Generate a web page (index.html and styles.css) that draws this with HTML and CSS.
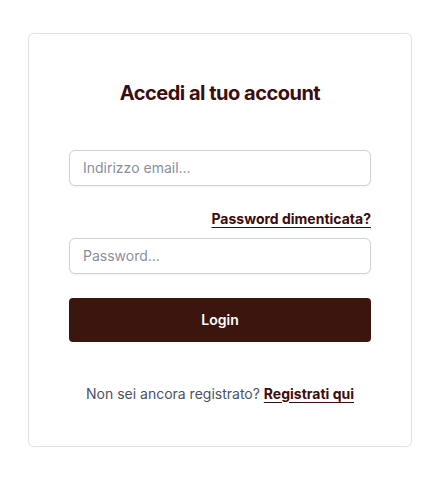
FILE: index.html
```html
<!DOCTYPE html>
<html lang="it">
<head>
<meta charset="utf-8">
<link rel="stylesheet" href="styles.css">
</head>
<body>
<main class="page">
  <div class="card">
    <h1 class="title">Accedi al tuo account</h1>
    <form class="form">
      <input class="input" type="email" placeholder="Indirizzo email...">
      <div class="forgot-row"><a class="link" href="#">Password dimenticata?</a></div>
      <input class="input" type="password" placeholder="Password...">
      <button class="btn" type="button">Login</button>
    </form>
    <p class="register">Non sei ancora registrato? <a class="link" href="#">Registrati qui</a></p>
  </div>
</main>
</body>
</html>
```
FILE: styles.css
```css
* { box-sizing: border-box; }
html, body { margin: 0; padding: 0; background: #fff; }
body { font-family: Inter, "Noto Sans", sans-serif; }
.page {
  height: 479px;
  padding-right: 2px;
  display: flex;
  align-items: center;
  justify-content: center;
}
.card {
  width: 384px;
  border: 1px solid #e2e2e6;
  border-radius: 6px;
  padding: 45px 40px 42px;
  display: flex;
  flex-direction: column;
}
.title {
  margin: 0;
  text-align: center;
  font-size: 20px;
  line-height: 28px;
  font-weight: 700;
  letter-spacing: -0.5px;
  color: #3b0d0d;
}
.form {
  margin-top: 43px;
  display: flex;
  flex-direction: column;
}
.input {
  height: 36px;
  border: 1px solid #d1d1d8;
  border-radius: 6px;
  padding: 0 13px;
  font-family: inherit;
  font-size: 14px;
  color: #111;
  box-shadow: 0 1px 2px rgba(0,0,0,0.05);
  outline: none;
}
.input::placeholder { color: #8a8f9b; }
.forgot-row {
  display: flex;
  justify-content: flex-end;
  margin: 24px 0 10px;
  line-height: 18px;
}
.link {
  color: #3b0d0d;
  font-weight: 700;
  font-size: 14px;
  text-decoration: underline;
  text-underline-offset: 3px;
}
.btn {
  margin-top: 24px;
  height: 44px;
  border: 0;
  border-radius: 4px;
  background: #3c160e;
  color: #fff;
  font-family: inherit;
  font-size: 14px;
  font-weight: 600;
}
.register {
  margin: 42px 0 0;
  text-align: center;
  font-size: 14px;
  line-height: 20px;
  color: #4b5263;
}
```
